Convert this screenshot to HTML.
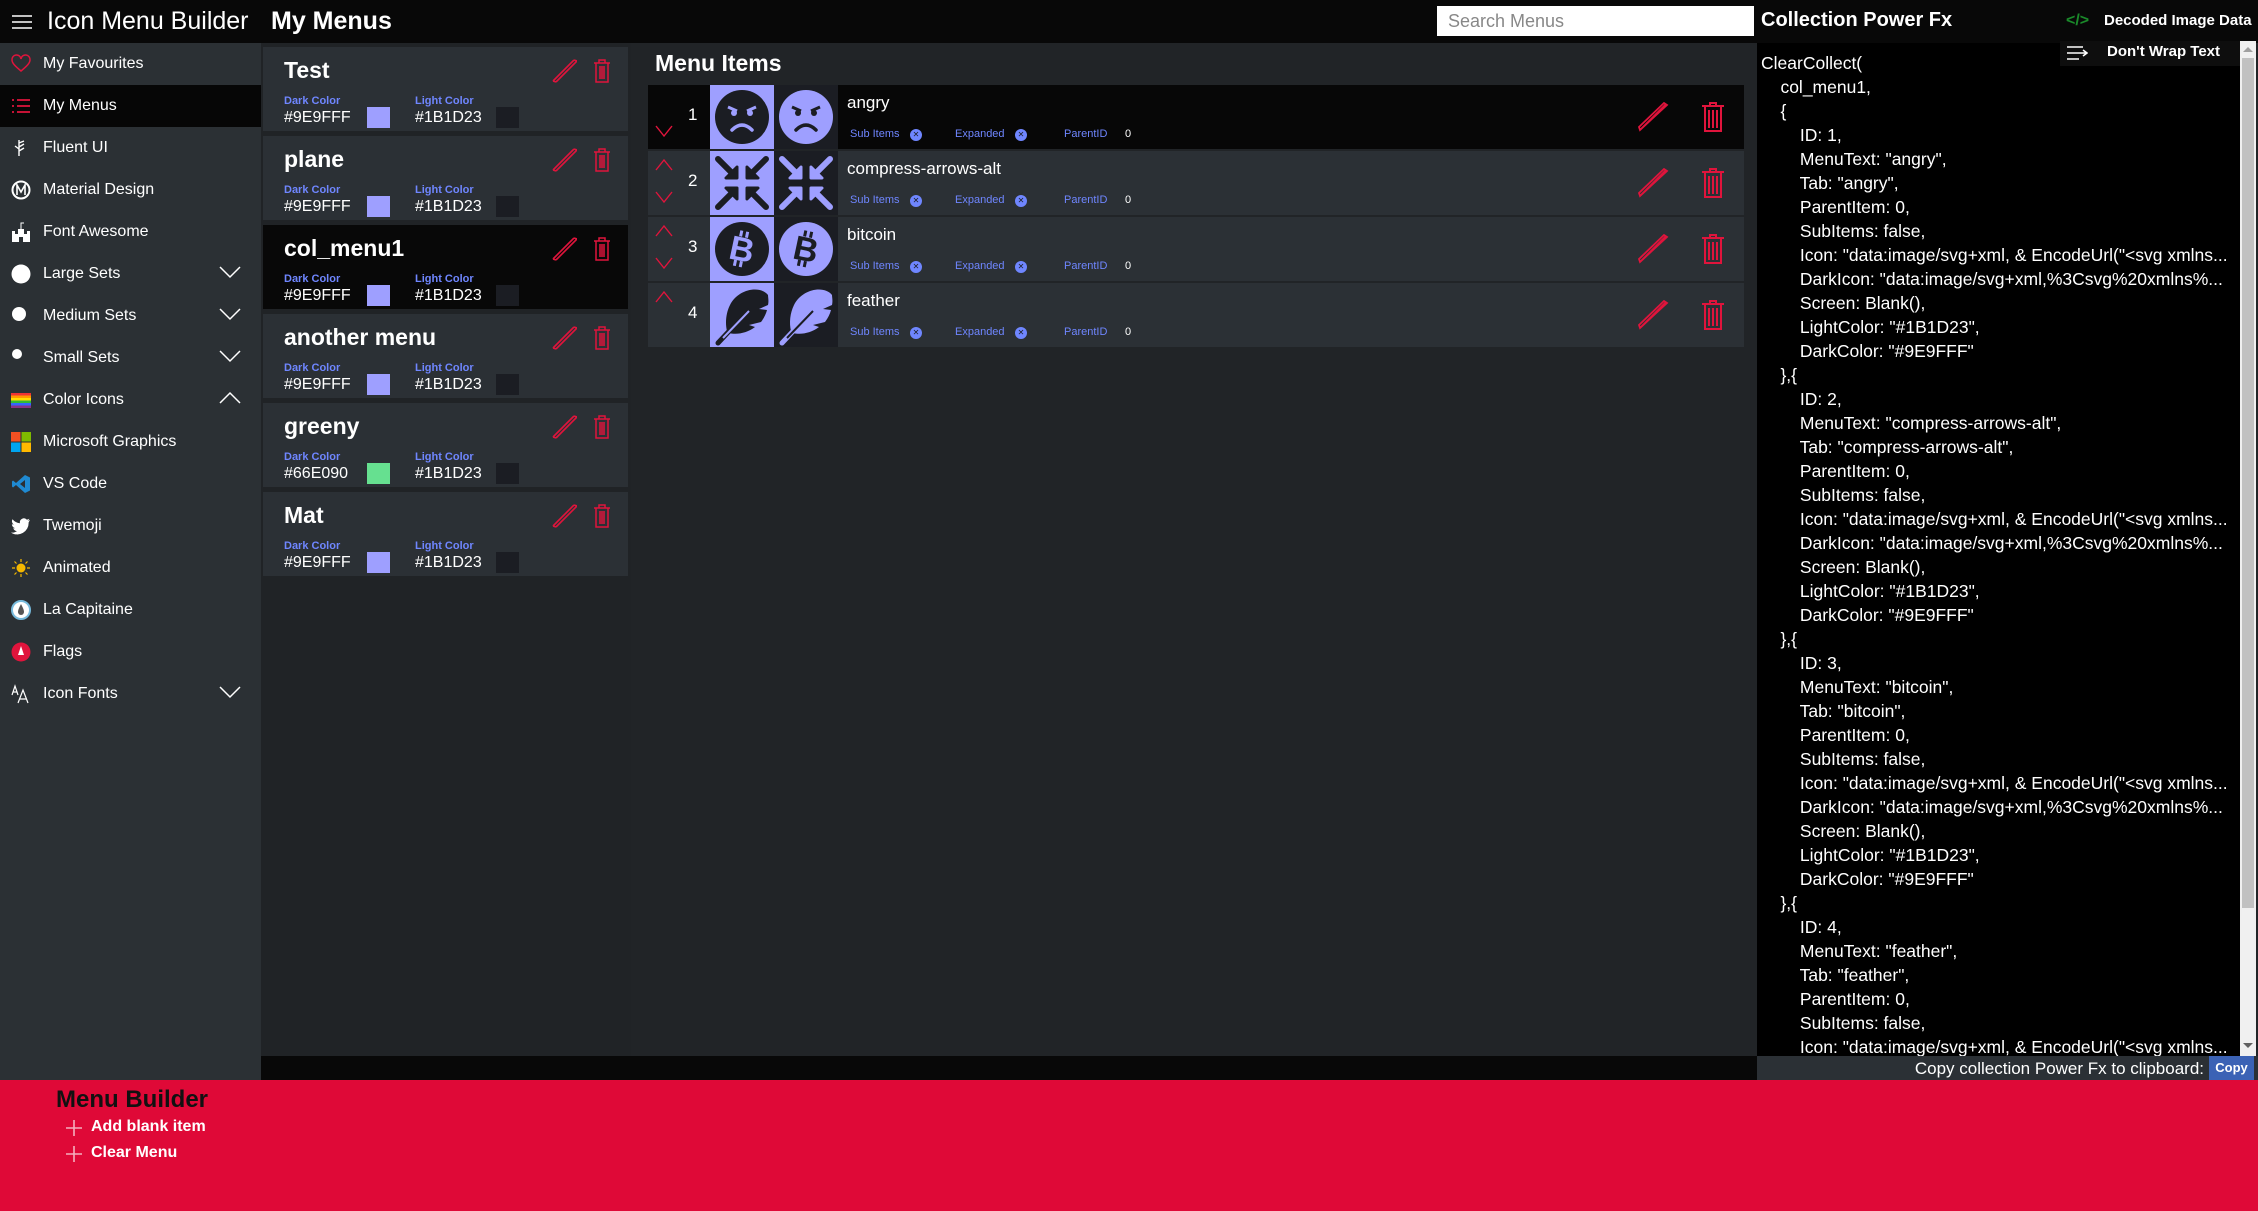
<!DOCTYPE html>
<html><head><meta charset="utf-8">
<style>
*{margin:0;padding:0;box-sizing:border-box}
body{width:2258px;height:1211px;overflow:hidden;background:#212427;font-family:"Liberation Sans",sans-serif;color:#fff;position:relative}
.abs{position:absolute}
#hdr{left:0;top:0;width:2258px;height:43px;background:#080808}
#side{left:0;top:43px;width:261px;height:1037px;background:#2b3034}
.si{position:absolute;left:0;width:261px;height:42px;font-size:16px;line-height:42px;padding-left:43px}
.si .ic{position:absolute;left:11px;top:11px;width:20px;height:20px}
.si .chev{position:absolute;left:219px;top:12px}
.card{position:absolute;left:263px;width:365px;height:84px;background:#2b3035}
.card.sel{background:#080808}
.card .t{position:absolute;left:21px;top:10px;font-size:23px;font-weight:bold}
.card .l1,.card .l2{position:absolute;top:48px;font-size:11px;font-weight:bold;color:#6f86ff}
.card .l1{left:21px}.card .l2{left:152px}
.card .v1,.card .v2{position:absolute;top:62px;font-size:16px}
.card .v1{left:21px}.card .v2{left:152px}
.card .s1,.card .s2{position:absolute;top:60px;width:23px;height:21px}
.card .s1{left:104px;background:#9e9fff}.card .s2{left:233px;background:#1b1d23}
.card .pe{position:absolute;left:288px;top:10px}
.card .tr{position:absolute;left:330px;top:12px}
.row{position:absolute;left:648px;width:1096px;height:64px;background:#2b3035}
.row.sel{background:#070707}
.row .n{position:absolute;left:40px;top:20px;font-size:17px}
.row .lb{position:absolute;left:62px;top:0;width:64px;height:64px;background:#9e9fff}
.row .db{position:absolute;left:126px;top:0;width:64px;height:64px;background:#1b1d23}
.row .nm{position:absolute;left:199px;top:8px;font-size:17px}
.row .sub{position:absolute;top:43px;font-size:11px;color:#6f86ff}
.row .x{position:absolute;top:44px;width:12px;height:12px;border-radius:50%;background:#6f86ff;color:#1b1d23;font-size:8px;line-height:12px;text-align:center}
.row .pe{position:absolute;left:989px;top:17px}
.row .tr{position:absolute;left:1053px;top:17px}
.up,.dn{position:absolute;left:7px}
.up{top:8px}.dn{top:40px}
#code{left:1757px;top:43px;width:483px;height:1013px;background:#000;overflow:hidden}
#code pre{font-family:"Liberation Sans",sans-serif;font-size:17.5px;line-height:24px;color:#fff;position:absolute;left:4px;top:8px;white-space:pre}
#foot{left:0;top:1080px;width:2258px;height:131px;background:#df0937}
</style></head><body>

<div id="hdr" class="abs">
  <svg class="abs" style="left:12px;top:14px" width="20" height="16"><path d="M0 2H20M0 8H20M0 14H20" stroke="#fff" stroke-width="1.6"/></svg>
  <div class="abs" style="left:47px;top:7px;font-size:25px">Icon Menu Builder</div>
  <div class="abs" style="left:271px;top:7px;font-size:25px;font-weight:bold">My Menus</div>
  <div class="abs" style="left:1437px;top:6px;width:317px;height:30px;background:#fff;color:#888;font-size:18px;line-height:30px;padding-left:11px">Search Menus</div>
  <div class="abs" style="left:1761px;top:9px;font-size:20px;font-weight:bold">Collection Power Fx</div>
  <div class="abs" style="left:2066px;top:12px;color:#1a8a2a;font-size:16px;font-weight:bold">&lt;/&gt;</div>
  <div class="abs" style="left:2104px;top:12px;font-size:15px;font-weight:bold">Decoded Image Data</div>
</div>

<div id="side" class="abs">
  <div class="si" style="top:0">
    <svg class="ic" viewBox="0 0 20 20"><path d="M10 17C4 12 1 9 1 6a4.5 4.5 0 0 1 9-1 4.5 4.5 0 0 1 9 1c0 3-3 6-9 11z" fill="none" stroke="#e0143c" stroke-width="1.5"/></svg>My Favourites</div>
  <div class="si" style="top:42px;background:#060606">
    <svg class="ic" viewBox="0 0 20 20"><path d="M1 4h2M6 4h13M1 10h2M6 10h13M1 16h2M6 16h13" stroke="#e0143c" stroke-width="1.8"/></svg>My Menus</div>
  <div class="si" style="top:84px"><svg class="ic" viewBox="0 0 20 20"><path d="M8 2v16M8 5l5-2M8 9l5-3M8 13l5-3M4 8l4 3" stroke="#fff" stroke-width="1.4" fill="none"/></svg>Fluent UI</div>
  <div class="si" style="top:126px"><svg class="ic" viewBox="0 0 20 20"><circle cx="10" cy="10" r="8.5" fill="none" stroke="#fff" stroke-width="2"/><path d="M6 15V5l4 7 4-7v10" stroke="#fff" stroke-width="1.6" fill="none"/></svg>Material Design</div>
  <div class="si" style="top:168px"><svg class="ic" viewBox="0 0 20 20"><path d="M1 20V9h3v3h3V7h6v5h3V9h3v11h-7v-5h-4v5z" fill="#fff"/><path d="M10 7V1h3" stroke="#fff" fill="none"/></svg>Font Awesome</div>
  <div class="si" style="top:210px"><svg class="ic" viewBox="0 0 20 20"><circle cx="10" cy="10" r="9.5" fill="#fff"/></svg>Large Sets<svg class="chev" width="22" height="14"><path d="M1 2l10 10 10-10" stroke="#fff" stroke-width="1.5" fill="none"/></svg></div>
  <div class="si" style="top:252px"><svg class="ic" viewBox="0 0 20 20"><circle cx="8" cy="8" r="7" fill="#fff"/></svg>Medium Sets<svg class="chev" width="22" height="14"><path d="M1 2l10 10 10-10" stroke="#fff" stroke-width="1.5" fill="none"/></svg></div>
  <div class="si" style="top:294px"><svg class="ic" viewBox="0 0 20 20"><circle cx="6" cy="6" r="5" fill="#fff"/></svg>Small Sets<svg class="chev" width="22" height="14"><path d="M1 2l10 10 10-10" stroke="#fff" stroke-width="1.5" fill="none"/></svg></div>
  <div class="si" style="top:336px"><svg class="ic" viewBox="0 0 20 20"><rect x="0" y="3" width="20" height="2.5" fill="#e33"/><rect x="0" y="5.5" width="20" height="2.5" fill="#f90"/><rect x="0" y="8" width="20" height="2.5" fill="#fd0"/><rect x="0" y="10.5" width="20" height="2.5" fill="#3b3"/><rect x="0" y="13" width="20" height="2.5" fill="#36f"/><rect x="0" y="15.5" width="20" height="2.5" fill="#838"/></svg>Color Icons<svg class="chev" width="22" height="14"><path d="M1 12l10-10 10 10" stroke="#fff" stroke-width="1.5" fill="none"/></svg></div>
  <div class="si" style="top:378px"><svg class="ic" viewBox="0 0 20 20"><rect x="0" y="0" width="9.5" height="9.5" fill="#f25022"/><rect x="10.5" y="0" width="9.5" height="9.5" fill="#7fba00"/><rect x="0" y="10.5" width="9.5" height="9.5" fill="#00a4ef"/><rect x="10.5" y="10.5" width="9.5" height="9.5" fill="#ffb900"/></svg>Microsoft Graphics</div>
  <div class="si" style="top:420px"><svg class="ic" viewBox="0 0 20 20"><path d="M14 1l5 2.5v13L14 19 5 11l-3 2.5-1-1V7.5l1-1L5 9zM14 6l-5 4 5 4z" fill="#1f8ad2"/></svg>VS Code</div>
  <div class="si" style="top:462px"><svg class="ic" viewBox="0 0 20 20"><path d="M19 4c-1 .5-1.5.6-2.3.7.8-.5 1.4-1.2 1.6-2-.8.4-1.6.8-2.5.9A4 4 0 0 0 9 7.3 11 11 0 0 1 1.5 3.3a4 4 0 0 0 1.2 5.3c-.6 0-1.2-.2-1.8-.5 0 2 1.4 3.6 3.2 4-.6.2-1.2.2-1.8.1.5 1.6 2 2.8 3.7 2.8A8 8 0 0 1 0 16.6 11.4 11.4 0 0 0 17.6 6.5z" fill="#fff"/></svg>Twemoji</div>
  <div class="si" style="top:504px"><svg class="ic" viewBox="0 0 20 20"><circle cx="10" cy="10" r="4.5" fill="#f5b800"/><path d="M10 1v3M10 16v3M1 10h3M16 10h3M3.5 3.5l2 2M14.5 14.5l2 2M3.5 16.5l2-2M14.5 5.5l2-2" stroke="#f5b800" stroke-width="1.2"/></svg>Animated</div>
  <div class="si" style="top:546px"><svg class="ic" viewBox="0 0 20 20"><circle cx="10" cy="10" r="9" fill="#fff" stroke="#7bd" stroke-width="2"/><path d="M10 4c-2 4-3 6-3 8a3 3 0 0 0 6 0c0-2-1-4-3-8z" fill="#555"/></svg>La Capitaine</div>
  <div class="si" style="top:588px"><svg class="ic" viewBox="0 0 20 20"><circle cx="10" cy="10" r="9.5" fill="#e0143c"/><path d="M10 4l3 9H7z" fill="#fff"/></svg>Flags</div>
  <div class="si" style="top:630px"><svg class="ic" viewBox="0 0 20 20"><path d="M1 11l3-9 3 9M2 8h4M7 19l5-13 5 13M8.5 15h7" stroke="#fff" stroke-width="1.2" fill="none"/></svg>Icon Fonts<svg class="chev" width="22" height="14"><path d="M1 2l10 10 10-10" stroke="#fff" stroke-width="1.5" fill="none"/></svg></div>
</div>

<div class="abs" style="left:261px;top:43px;width:370px;height:1013px;background:#202326"></div>
<div class="card" style="top:47px"><div class="t">Test</div><div class="l1">Dark Color</div><div class="v1">#9E9FFF</div><div class="s1"></div><div class="l2">Light Color</div><div class="v2">#1B1D23</div><div class="s2"></div>
<svg class="pe" width="26" height="26"><path d="M2 24L23 3M5 25l21-21M2 24l3 1M23 3l3 1" stroke="#e0143c" stroke-width="1.6" fill="none"/></svg><svg class="tr" width="18" height="24"><path d="M1 4h16M6 4V1h6v3M3 4v19h12V4M7 7v13M9 7v13M11 7v13" stroke="#e0143c" stroke-width="1.5" fill="none"/></svg></div>
<div class="card" style="top:136px"><div class="t">plane</div><div class="l1">Dark Color</div><div class="v1">#9E9FFF</div><div class="s1"></div><div class="l2">Light Color</div><div class="v2">#1B1D23</div><div class="s2"></div>
<svg class="pe" width="26" height="26"><path d="M2 24L23 3M5 25l21-21M2 24l3 1M23 3l3 1" stroke="#e0143c" stroke-width="1.6" fill="none"/></svg><svg class="tr" width="18" height="24"><path d="M1 4h16M6 4V1h6v3M3 4v19h12V4M7 7v13M9 7v13M11 7v13" stroke="#e0143c" stroke-width="1.5" fill="none"/></svg></div>
<div class="card sel" style="top:225px"><div class="t">col_menu1</div><div class="l1">Dark Color</div><div class="v1">#9E9FFF</div><div class="s1"></div><div class="l2">Light Color</div><div class="v2">#1B1D23</div><div class="s2"></div>
<svg class="pe" width="26" height="26"><path d="M2 24L23 3M5 25l21-21M2 24l3 1M23 3l3 1" stroke="#e0143c" stroke-width="1.6" fill="none"/></svg><svg class="tr" width="18" height="24"><path d="M1 4h16M6 4V1h6v3M3 4v19h12V4M7 7v13M9 7v13M11 7v13" stroke="#e0143c" stroke-width="1.5" fill="none"/></svg></div>
<div class="card" style="top:314px"><div class="t">another menu</div><div class="l1">Dark Color</div><div class="v1">#9E9FFF</div><div class="s1"></div><div class="l2">Light Color</div><div class="v2">#1B1D23</div><div class="s2"></div>
<svg class="pe" width="26" height="26"><path d="M2 24L23 3M5 25l21-21M2 24l3 1M23 3l3 1" stroke="#e0143c" stroke-width="1.6" fill="none"/></svg><svg class="tr" width="18" height="24"><path d="M1 4h16M6 4V1h6v3M3 4v19h12V4M7 7v13M9 7v13M11 7v13" stroke="#e0143c" stroke-width="1.5" fill="none"/></svg></div>
<div class="card" style="top:403px"><div class="t">greeny</div><div class="l1">Dark Color</div><div class="v1">#66E090</div><div class="s1" style="background:#66e090"></div><div class="l2">Light Color</div><div class="v2">#1B1D23</div><div class="s2"></div>
<svg class="pe" width="26" height="26"><path d="M2 24L23 3M5 25l21-21M2 24l3 1M23 3l3 1" stroke="#e0143c" stroke-width="1.6" fill="none"/></svg><svg class="tr" width="18" height="24"><path d="M1 4h16M6 4V1h6v3M3 4v19h12V4M7 7v13M9 7v13M11 7v13" stroke="#e0143c" stroke-width="1.5" fill="none"/></svg></div>
<div class="card" style="top:492px"><div class="t">Mat</div><div class="l1">Dark Color</div><div class="v1">#9E9FFF</div><div class="s1"></div><div class="l2">Light Color</div><div class="v2">#1B1D23</div><div class="s2"></div>
<svg class="pe" width="26" height="26"><path d="M2 24L23 3M5 25l21-21M2 24l3 1M23 3l3 1" stroke="#e0143c" stroke-width="1.6" fill="none"/></svg><svg class="tr" width="18" height="24"><path d="M1 4h16M6 4V1h6v3M3 4v19h12V4M7 7v13M9 7v13M11 7v13" stroke="#e0143c" stroke-width="1.5" fill="none"/></svg></div>

<div class="abs" style="left:655px;top:50px;font-size:23px;font-weight:bold">Menu Items</div>

<div class="row sel" style="top:85px">
  <svg class="dn" width="18" height="12"><path d="M1 1l8 10 8-10" stroke="#e0143c" stroke-width="1.4" fill="none"/></svg>
  <div class="n">1</div>
  <div class="lb"><svg width="64" height="64"><circle cx="32" cy="32" r="27" fill="#1b1d23"/><path d="M18 22l9 4M46 22l-9 4" stroke="#9e9fff" stroke-width="3"/><circle cx="24" cy="28" r="3" fill="#9e9fff"/><circle cx="40" cy="28" r="3" fill="#9e9fff"/><path d="M22 45q10-10 20 0" stroke="#9e9fff" stroke-width="3.5" fill="none" stroke-linecap="round"/></svg></div>
  <div class="db"><svg width="64" height="64"><circle cx="32" cy="32" r="27" fill="#9e9fff"/><path d="M18 22l9 4M46 22l-9 4" stroke="#1b1d23" stroke-width="3"/><circle cx="24" cy="28" r="3" fill="#1b1d23"/><circle cx="40" cy="28" r="3" fill="#1b1d23"/><path d="M22 45q10-10 20 0" stroke="#1b1d23" stroke-width="3.5" fill="none" stroke-linecap="round"/></svg></div>
  <div class="nm">angry</div>
  <div class="sub" style="left:202px">Sub Items</div><div class="x" style="left:262px">✕</div>
  <div class="sub" style="left:307px">Expanded</div><div class="x" style="left:367px">✕</div>
  <div class="sub" style="left:416px">ParentID</div><div class="sub" style="left:477px;color:#fff">0</div>
  <svg class="pe" width="32" height="30"><path d="M3 28L29 2M3 28l-1-3 25-24 3 2z" stroke="#e0143c" stroke-width="1.8" fill="none"/></svg>
  <svg class="tr" width="24" height="30"><path d="M1 4h22M9 4V1h6v3M4 4v25h16V4M8 8v18M12 8v18M16 8v18" stroke="#e0143c" stroke-width="2" fill="none"/></svg>
</div>

<div class="row" style="top:151px">
  <svg class="up" width="18" height="12"><path d="M1 11l8-10 8 10" stroke="#e0143c" stroke-width="1.4" fill="none"/></svg>
  <svg class="dn" width="18" height="12"><path d="M1 1l8 10 8-10" stroke="#e0143c" stroke-width="1.4" fill="none"/></svg>
  <div class="n">2</div>
  <div class="lb"><svg width="64" height="64"><g stroke="#1b1d23" stroke-width="6" stroke-linecap="round" fill="#1b1d23"><path d="M8 8l14 14M56 8L42 22M8 56l14-14M56 56L42 42"/><path d="M16 27h11V16z M48 27H37V16z M16 37h11v11z M48 37H37v11z" stroke-width="3" stroke-linejoin="round"/></g></svg></div>
  <div class="db"><svg width="64" height="64"><g stroke="#9e9fff" stroke-width="6" stroke-linecap="round" fill="#9e9fff"><path d="M8 8l14 14M56 8L42 22M8 56l14-14M56 56L42 42"/><path d="M16 27h11V16z M48 27H37V16z M16 37h11v11z M48 37H37v11z" stroke-width="3" stroke-linejoin="round"/></g></svg></div>
  <div class="nm">compress-arrows-alt</div>
  <div class="sub" style="left:202px">Sub Items</div><div class="x" style="left:262px">✕</div>
  <div class="sub" style="left:307px">Expanded</div><div class="x" style="left:367px">✕</div>
  <div class="sub" style="left:416px">ParentID</div><div class="sub" style="left:477px;color:#fff">0</div>
  <svg class="pe" width="32" height="30"><path d="M3 28L29 2M3 28l-1-3 25-24 3 2z" stroke="#e0143c" stroke-width="1.8" fill="none"/></svg>
  <svg class="tr" width="24" height="30"><path d="M1 4h22M9 4V1h6v3M4 4v25h16V4M8 8v18M12 8v18M16 8v18" stroke="#e0143c" stroke-width="2" fill="none"/></svg>
</div>

<div class="row" style="top:217px">
  <svg class="up" width="18" height="12"><path d="M1 11l8-10 8 10" stroke="#e0143c" stroke-width="1.4" fill="none"/></svg>
  <svg class="dn" width="18" height="12"><path d="M1 1l8 10 8-10" stroke="#e0143c" stroke-width="1.4" fill="none"/></svg>
  <div class="n">3</div>
  <div class="lb"><svg width="64" height="64"><circle cx="32" cy="32" r="27" fill="#1b1d23"/><text x="32" y="44" text-anchor="middle" font-family="Liberation Sans" font-weight="bold" font-size="34" fill="#9e9fff" transform="rotate(12 32 32)">B</text><path d="M28 14v6M34 14v6M28 44v6M34 44v6" stroke="#9e9fff" stroke-width="3" transform="rotate(12 32 32)"/></svg></div>
  <div class="db"><svg width="64" height="64"><circle cx="32" cy="32" r="27" fill="#9e9fff"/><text x="32" y="44" text-anchor="middle" font-family="Liberation Sans" font-weight="bold" font-size="34" fill="#1b1d23" transform="rotate(12 32 32)">B</text><path d="M28 14v6M34 14v6M28 44v6M34 44v6" stroke="#1b1d23" stroke-width="3" transform="rotate(12 32 32)"/></svg></div>
  <div class="nm">bitcoin</div>
  <div class="sub" style="left:202px">Sub Items</div><div class="x" style="left:262px">✕</div>
  <div class="sub" style="left:307px">Expanded</div><div class="x" style="left:367px">✕</div>
  <div class="sub" style="left:416px">ParentID</div><div class="sub" style="left:477px;color:#fff">0</div>
  <svg class="pe" width="32" height="30"><path d="M3 28L29 2M3 28l-1-3 25-24 3 2z" stroke="#e0143c" stroke-width="1.8" fill="none"/></svg>
  <svg class="tr" width="24" height="30"><path d="M1 4h22M9 4V1h6v3M4 4v25h16V4M8 8v18M12 8v18M16 8v18" stroke="#e0143c" stroke-width="2" fill="none"/></svg>
</div>

<div class="row" style="top:283px">
  <svg class="up" width="18" height="12"><path d="M1 11l8-10 8 10" stroke="#e0143c" stroke-width="1.4" fill="none"/></svg>
  <div class="n">4</div>
  <div class="lb"><svg width="64" height="64"><path d="M58 12C50 2 28 6 20 22c-4 8-5 18-3 26l2 2c8 2 18 0 26-6l-6-2 12-3c3-4 5-8 6-12l-8-1 9-4c1-4 0-8 0-10z" fill="#1b1d23"/><path d="M8 60l30-32" stroke="#1b1d23" stroke-width="5" stroke-linecap="round"/><path d="M13 55l26-27" stroke="#9e9fff" stroke-width="2"/></svg></div>
  <div class="db"><svg width="64" height="64"><path d="M58 12C50 2 28 6 20 22c-4 8-5 18-3 26l2 2c8 2 18 0 26-6l-6-2 12-3c3-4 5-8 6-12l-8-1 9-4c1-4 0-8 0-10z" fill="#9e9fff"/><path d="M8 60l30-32" stroke="#9e9fff" stroke-width="5" stroke-linecap="round"/><path d="M13 55l26-27" stroke="#1b1d23" stroke-width="2"/></svg></div>
  <div class="nm">feather</div>
  <div class="sub" style="left:202px">Sub Items</div><div class="x" style="left:262px">✕</div>
  <div class="sub" style="left:307px">Expanded</div><div class="x" style="left:367px">✕</div>
  <div class="sub" style="left:416px">ParentID</div><div class="sub" style="left:477px;color:#fff">0</div>
  <svg class="pe" width="32" height="30"><path d="M3 28L29 2M3 28l-1-3 25-24 3 2z" stroke="#e0143c" stroke-width="1.8" fill="none"/></svg>
  <svg class="tr" width="24" height="30"><path d="M1 4h22M9 4V1h6v3M4 4v25h16V4M8 8v18M12 8v18M16 8v18" stroke="#e0143c" stroke-width="2" fill="none"/></svg>
</div>

<div class="abs" style="left:261px;top:1056px;width:1496px;height:24px;background:#080808"></div>
<div class="abs" style="left:1757px;top:1056px;width:501px;height:24px;background:#2b3035"></div>
<div class="abs" style="left:1757px;top:1057px;width:447px;font-size:17px;line-height:23px;text-align:right">Copy collection Power Fx to clipboard:</div>
<div class="abs" style="left:2209px;top:1056px;width:45px;height:24px;background:#3b62b5;font-size:13px;line-height:24px;text-align:center;font-weight:bold">Copy</div>

<div id="code" class="abs"><pre>ClearCollect(
    col_menu1,
    {
        ID: 1,
        MenuText: "angry",
        Tab: "angry",
        ParentItem: 0,
        SubItems: false,
        Icon: "data:image/svg+xml, &amp; EncodeUrl("&lt;svg xmlns...
        DarkIcon: "data:image/svg+xml,%3Csvg%20xmlns%...
        Screen: Blank(),
        LightColor: "#1B1D23",
        DarkColor: "#9E9FFF"
    },{
        ID: 2,
        MenuText: "compress-arrows-alt",
        Tab: "compress-arrows-alt",
        ParentItem: 0,
        SubItems: false,
        Icon: "data:image/svg+xml, &amp; EncodeUrl("&lt;svg xmlns...
        DarkIcon: "data:image/svg+xml,%3Csvg%20xmlns%...
        Screen: Blank(),
        LightColor: "#1B1D23",
        DarkColor: "#9E9FFF"
    },{
        ID: 3,
        MenuText: "bitcoin",
        Tab: "bitcoin",
        ParentItem: 0,
        SubItems: false,
        Icon: "data:image/svg+xml, &amp; EncodeUrl("&lt;svg xmlns...
        DarkIcon: "data:image/svg+xml,%3Csvg%20xmlns%...
        Screen: Blank(),
        LightColor: "#1B1D23",
        DarkColor: "#9E9FFF"
    },{
        ID: 4,
        MenuText: "feather",
        Tab: "feather",
        ParentItem: 0,
        SubItems: false,
        Icon: "data:image/svg+xml, &amp; EncodeUrl("&lt;svg xmlns...</pre></div>
<div class="abs" style="left:2060px;top:41px;width:180px;height:25px;background:#0e0e0e"></div>
<svg class="abs" style="left:2066px;top:44px" width="22" height="18"><path d="M1 3H17M1 9H21M1 15H13M17 6l4 3-4 3" stroke="#fff" stroke-width="1.6" fill="none"/></svg>
<div class="abs" style="left:2107px;top:43px;font-size:15px;font-weight:bold">Don't Wrap Text</div>
<div class="abs" style="left:2240px;top:41px;width:16px;height:1015px;background:#f0f0f0"></div>
<div class="abs" style="left:2242px;top:58px;width:12px;height:850px;background:#c1c1c1"></div>
<svg class="abs" style="left:2243px;top:46px" width="10" height="6"><path d="M0 6l5-5 5 5z" fill="#a0a0a0"/></svg>
<svg class="abs" style="left:2243px;top:1043px" width="10" height="6"><path d="M0 0l5 5 5-5z" fill="#606060"/></svg>

<div id="foot" class="abs">
  <div class="abs" style="left:56px;top:6px;font-size:24px;font-weight:bold;color:#111">Menu Builder</div>
  <svg class="abs" style="left:66px;top:40px" width="16" height="16"><path d="M8 0v16M0 8h16" stroke="#f4b0be" stroke-width="1.6"/></svg>
  <div class="abs" style="left:91px;top:38px;font-size:16px;font-weight:bold">Add blank item</div>
  <svg class="abs" style="left:66px;top:66px" width="16" height="16"><path d="M8 0v16M0 8h16" stroke="#f4b0be" stroke-width="1.6"/></svg>
  <div class="abs" style="left:91px;top:64px;font-size:16px;font-weight:bold">Clear Menu</div>
</div>
</body></html>
